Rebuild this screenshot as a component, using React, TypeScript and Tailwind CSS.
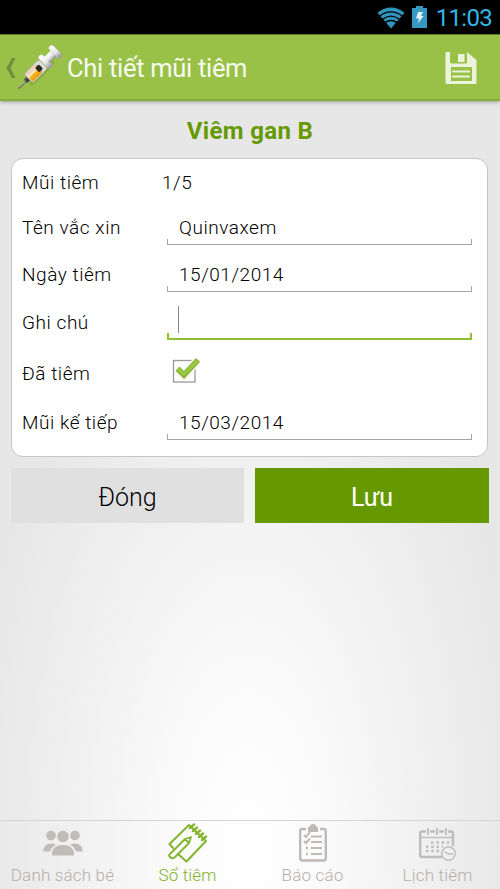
import type { ReactNode } from "react";

function Syringe() {
  return (
    <svg width="46" height="46" viewBox="0 0 46 46" className="shrink-0">
      <defs>
        <linearGradient id="metal" x1="0" y1="0" x2="1" y2="0">
          <stop offset="0" stopColor="#ffffff" />
          <stop offset="0.55" stopColor="#e8e8e8" />
          <stop offset="1" stopColor="#8c8c8c" />
        </linearGradient>
        <linearGradient id="serum" x1="0" y1="0" x2="1" y2="0">
          <stop offset="0" stopColor="#e9c9a8" />
          <stop offset="0.45" stopColor="#fbe8c8" />
          <stop offset="0.55" stopColor="#f9b51e" />
          <stop offset="1" stopColor="#e89b10" />
        </linearGradient>
      </defs>
      <ellipse cx="26" cy="29" rx="17" ry="3" transform="rotate(-45 26 29)" fill="#5d7a25" opacity="0.3" />
      <g transform="translate(2.5 44.5) rotate(45)">
        <path d="M0 0V-12" stroke="#6e6e6e" strokeWidth="1.8" />
        <path d="M-.5 -1V-11" stroke="#dcdcdc" strokeWidth=".7" />
        <rect x="-2.5" y="-15" width="5" height="5" rx="1" fill="#4b4b43" />
        <rect x="-6.4" y="-35" width="12.8" height="21" rx="2.2" fill="#dcdcd6" stroke="#9b9b90" strokeWidth=".6" />
        <rect x="-5.4" y="-29" width="10.8" height="14" rx="1.5" fill="url(#serum)" />
        <rect x="-3" y="-31.5" width="6.4" height="5.5" rx="1.8" fill="#292923" />
        <rect x="-8.5" y="-41" width="17" height="5.8" rx="2.8" fill="url(#metal)" stroke="#aaa" strokeWidth=".4" />
        <rect x="-4" y="-51" width="8" height="11" fill="url(#metal)" />
        <rect x="-8" y="-55" width="16" height="5.8" rx="2.8" fill="url(#metal)" stroke="#aaa" strokeWidth=".4" />
      </g>
    </svg>
  );
}

function StatusBar() {
  return (
    <div className="flex h-[34px] shrink-0 items-center justify-end bg-black pr-[9px]">
      <svg width="28" height="22" viewBox="0 0 28 22" className="mt-[1px]">
        <path d="M0.5 5.7Q14-4.8 27.5 5.7L14 21.4Z" fill="#3095bd" />
        <path d="M2.4 9.2Q14 .6 25.6 9.2M5.2 12.5Q14 5.8 22.8 12.5M8 15.6Q14 11.3 20 15.6" fill="none" stroke="#000" strokeWidth="1.4" />
      </svg>
      <svg width="15" height="22" viewBox="0 0 15 22" className="ml-[7px]">
        <path d="M4 0H11V2H15V22H0V2H4Z" fill="#3598c0" />
        <path d="M6 6H11L9 10H11.5L5.5 18L7.2 12.5H4Z" fill="#e3f2f8" />
      </svg>
      <span className="ml-[9px] mt-[1px] -mr-[1px] text-[24px] leading-[34px] tracking-[-0.7px] text-[#33b5e5]">11:03</span>
    </div>
  );
}

function Header() {
  return (
    <header className="flex h-[67px] shrink-0 items-center border-t border-b-2 border-t-[#5f7d22] border-b-[#88ab3b] bg-[#99c148] shadow-[0_1px_4px_rgba(0,0,0,0.35)]">
      <svg width="10" height="22" viewBox="0 0 10 22" className="ml-[6px] mt-[2px]">
        <path d="M6 1H9.6L4.6 11L9.6 21H6L0.2 11Z" fill="#748f3c" />
      </svg>
      <Syringe />
      <h1 className="ml-[5px] mt-[2px] text-[25.5px] tracking-[-0.3px] text-[#f8fbf0]">Chi tiết mũi tiêm</h1>
      <svg width="32" height="32" viewBox="0 0 32 32" className="ml-auto mr-[23px] mt-[1px]">
        <path fillRule="evenodd" d="M1 0H5V10Q5 11.5 7 11.5H21Q22 11.5 22 10V0L31.5 8V30.5Q31.5 32 30 32H2Q.5 32 .5 30.5V1ZM6 15V29H27V15Z" fill="#ebf3db" />
        <path d="M13 2H19.5V10H13Z" fill="#ebf3db" />
        <path d="M8 19.5H24M8 24.5H24" stroke="#ebf3db" strokeWidth="2.2" strokeLinecap="round" />
      </svg>
    </header>
  );
}

function Label({ children }: { children: ReactNode }) {
  return <span className="w-[145px] shrink-0 pb-[5px]">{children}</span>;
}

function Field({ value, focused = false }: { value?: string; focused?: boolean }) {
  return (
    <div className="flex w-[305px] flex-col">
      <div className="flex h-[32px] items-end pl-[12px] text-black">
        {focused ? <span className="-ml-px h-[27px] w-px bg-[#8c8c8c]" /> : <span className="mb-[-1px] leading-[24px]">{value}</span>}
      </div>
      {focused ? (
        <div className="h-[7px] border-x-2 border-b-2 border-[#92bf30]" />
      ) : (
        <div className="h-[6px] border-x border-b border-[#a5a5a5]" />
      )}
    </div>
  );
}

function Tick() {
  return (
    <svg width="34" height="34" viewBox="0 0 34 34" className="mb-[3px]">
      <rect x="6.5" y="6.5" width="21.5" height="21.5" fill="#fff" stroke="#999" strokeWidth="1.3" />
      <path d="M24 10L29 4V14L24 18Z" fill="#fff" />
      <path d="M10.5 15L17 21L31 6" fill="none" stroke="#f1f8e3" strokeWidth="9" />
      <path d="M10.5 14.8L17 21L31 6" fill="none" stroke="#7a9d36" strokeWidth="5.4" />
      <path d="M11 15L17 20.5L30.5 6.5" fill="none" stroke="#98c83e" strokeWidth="3.8" />
    </svg>
  );
}

function People() {
  return (
    <svg width="42" height="26" viewBox="0 0 42 26" fill="#c0bcb7">
      <circle cx="9" cy="5.5" r="4.8" /><circle cx="33" cy="5.5" r="4.8" /><circle cx="21" cy="6.5" r="5.8" />
      <path d="M1 21.5Q2 13.5 9 13.5Q12 13.5 14 14.8Q9.5 17 8 21.5ZM41 21.5Q40 13.5 33 13.5Q30 13.5 28 14.8Q32.5 17 34 21.5Z" />
      <path d="M10 25.5V22Q12 15 21 15T32 22V25.5Z" />
    </svg>
  );
}

function Notebook() {
  return (
    <svg width="40" height="40" viewBox="0 0 40 40" fill="none" stroke="#83b52e" strokeWidth="2" strokeLinejoin="round" strokeLinecap="round">
      <path d="M5 25L1.5 21L21 2L38 18L18.5 38.5L10 31" />
      <path d="M2 31L17 16L23 14L21 20L6 35Q4 36 2 34T2 31ZM17 16L21 20" strokeWidth="1.8" />
      <path d="M22 5L26 1.5M25 8L29 4.5M28 11L32 7.5M31 14L35 10.5M34 17L38 13.5" strokeWidth="2.4" />
    </svg>
  );
}

function Clipboard() {
  return (
    <svg width="28" height="38" viewBox="0 0 28 38" fill="none" stroke="#bdb9b5" strokeWidth="2">
      <path d="M7 5H3Q1.2 5 1.2 7V34Q1.2 36.5 3 36.5H25Q26.8 36.5 26.8 34V7Q26.8 5 25 5H21" strokeWidth="2.4" />
      <path d="M10 7V4H11.5Q11.5 1 14 1T16.5 4H18V7Z" fill="#bdb9b5" />
      <path d="M12 12.5H23M12 18H23M12 24H23M12 30H23" />
      <path d="M5 11L7 13L11 8M5 17L7 19L11 14.5" />
      <path d="M7 24H9M7 30H9" strokeWidth="2.4" />
    </svg>
  );
}

function CalendarClock() {
  return (
    <svg width="37" height="34" viewBox="0 0 37 34" fill="none" stroke="#bdbdbd" strokeWidth="1.4">
      <path d="M23 29H3Q1.2 29 1.2 27V5Q1.2 3.5 3 3.5H7M11 3.5H16M20 3.5H25M29 3.5H32Q34 3.5 34 5.5V18" strokeWidth="2.4" />
      <path d="M9 0V7M18 0V7M27 0V7" strokeWidth="1.8" />
      <path d="M2 9.5H34" />
      <path d="M12 14.5H30M7 18.8H24M7 23H20" strokeWidth="2.4" strokeDasharray="2.4 2.9" />
      <circle cx="29.5" cy="25.5" r="6.7" />
      <path d="M25.5 23.5L29.5 26H34" />
    </svg>
  );
}

function NavItem({ label, icon, active = false, iconClass }: { label: string; icon: ReactNode; active?: boolean; iconClass: string }) {
  return (
    <div className={`flex flex-1 flex-col items-center text-[17px] ${active ? "text-[#7fb31f]" : "text-[#b5afaa]"}`}>
      <div className={`flex h-[43px] ${iconClass}`}>{icon}</div>
      <span className="whitespace-nowrap font-light leading-[22px] tracking-[0.18px]">{label}</span>
    </div>
  );
}

export default function App() {
  return (
    <div className="flex h-[889px] w-[500px] flex-col overflow-hidden bg-[#e7e7e7] bg-[radial-gradient(ellipse_275px_600px_at_248px_850px,#ffffff_0%,#fafafa_30%,#f0f0f0_65%,#e7e7e7_100%)] font-['Roboto',sans-serif]">
      <StatusBar />
      <Header />
      <h2 className="mt-[14px] h-[32px] text-center text-[24px] font-bold leading-[32px] tracking-[0.35px] text-[#669900]">Viêm gan B</h2>
      <section className="mx-[11px] mt-[11px] h-[299px] w-[477px] shrink-0 rounded-[12px] border border-[#c6c6c6] bg-white pl-[10px] text-[19px] font-light leading-[24px] tracking-[0.55px] text-black">
        <div className="flex h-[36px] items-end">
          <span className="w-[140px]">Mũi tiêm</span>
          <span>1/5</span>
        </div>
        <div className="flex h-[50px] items-end"><Label>Tên vắc xin</Label><Field value="Quinvaxem" /></div>
        <div className="flex h-[47px] items-end"><Label>Ngày tiêm</Label><Field value="15/01/2014" /></div>
        <div className="flex h-[48px] items-end"><Label>Ghi chú</Label><Field focused /></div>
        <div className="flex h-[51px] items-end"><Label>Đã tiêm</Label><Tick /></div>
        <div className="flex h-[49px] items-end"><Label>Mũi kế tiếp</Label><Field value="15/03/2014" /></div>
      </section>
      <div className="mx-[11px] mt-[11px] flex h-[55px] gap-[11px] text-[25px]">
        <button className="w-[233px] bg-[#e0e0e0] pt-[4px] font-light text-black">Đóng</button>
        <button className="w-[234px] bg-[#669900] pt-[4px] text-white">Lưu</button>
      </div>
      <nav className="mt-auto flex h-[69px] border-t border-[#d5d5d5]">
        <NavItem label="Danh sách bé" iconClass="pt-[9px]" icon={<People />} />
        <NavItem label="Sổ tiêm" active iconClass="pt-[2px]" icon={<Notebook />} />
        <NavItem label="Báo cáo" iconClass="pt-[3px]" icon={<Clipboard />} />
        <NavItem label="Lịch tiêm" iconClass="pt-[7px]" icon={<CalendarClock />} />
      </nav>
    </div>
  );
}
